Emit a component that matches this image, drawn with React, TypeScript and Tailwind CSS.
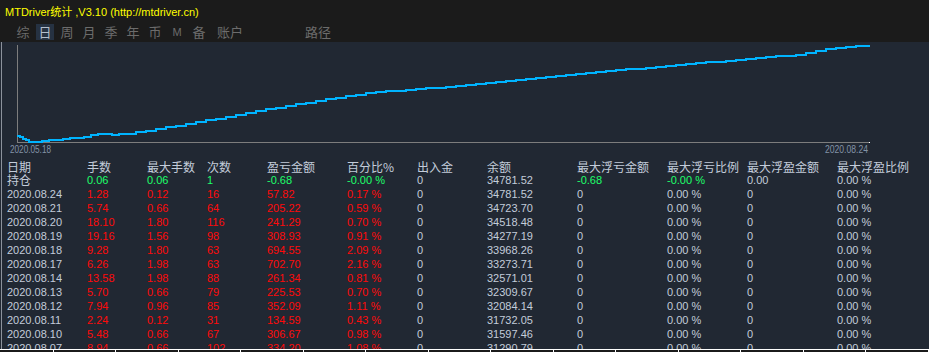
import React from "react";

const G = "text-[#1eff6a]";
const R = "text-[#ff0a0a]";
const W = "text-[#c3ccda]";

type Row = string[];
const rows: Row[] = [
  ["2020.08.24", "1.28", "0.12", "16", "57.82", "0.17 %", "0", "34781.52"],
  ["2020.08.21", "5.74", "0.66", "64", "205.22", "0.59 %", "0", "34723.70"],
  ["2020.08.20", "18.10", "1.80", "116", "241.29", "0.70 %", "0", "34518.48"],
  ["2020.08.19", "19.16", "1.56", "98", "308.93", "0.91 %", "0", "34277.19"],
  ["2020.08.18", "9.28", "1.80", "63", "694.55", "2.09 %", "0", "33968.26"],
  ["2020.08.17", "6.26", "1.98", "63", "702.70", "2.16 %", "0", "33273.71"],
  ["2020.08.14", "13.58", "1.98", "88", "261.34", "0.81 %", "0", "32571.01"],
  ["2020.08.13", "5.70", "0.66", "79", "225.53", "0.70 %", "0", "32309.67"],
  ["2020.08.12", "7.94", "0.96", "85", "352.09", "1.11 %", "0", "32084.14"],
  ["2020.08.11", "2.24", "0.12", "31", "134.59", "0.43 %", "0", "31732.05"],
  ["2020.08.10", "5.48", "0.66", "67", "306.67", "0.98 %", "0", "31597.46"],
  ["2020.08.07", "8.94", "0.66", "102", "334.20", "1.08 %", "0", "31290.79"],
];

const headers = ["日期", "手数", "最大手数", "次数", "盈亏金额", "百分比%", "出入金", "余额", "最大浮亏金额", "最大浮亏比例", "最大浮盈金额", "最大浮盈比例"];

const keyPts: [number, number][] = [
  [14, 135.5], [20, 139], [28, 142.5], [40, 141], [50, 140], [60, 139], [72, 138], [90, 135], [97, 133],
  [103, 134], [110, 135], [120, 134], [140, 131], [165, 127], [200, 121], [233, 115], [270, 108],
  [300, 103], [330, 98], [365, 93], [400, 90], [430, 88], [465, 85], [500, 81], [530, 78], [565, 75],
  [600, 71], [640, 68], [680, 64], [720, 61], [765, 57], [795, 55], [805, 53], [815, 51], [830, 48],
  [850, 46], [867, 45.5],
];

function interp(x: number) {
  for (let i = 0; i < keyPts.length - 1; i++) {
    const [x0, y0] = keyPts[i];
    const [x1, y1] = keyPts[i + 1];
    if (x >= x0 && x <= x1) return y0 + ((y1 - y0) * (x - x0)) / (x1 - x0);
  }
  return keyPts[keyPts.length - 1][1];
}

function buildPath() {
  const off = 42;
  let d = `M14 ${Math.round(interp(14)) - off}`;
  let x = 14;
  const step = (xx: number) => (xx < 30 ? 3 : xx < 120 ? 7 : 10);
  while (x < 867) {
    const nx = Math.min(867, x + step(x));
    d += ` H${nx} V${Math.round(interp(nx)) - off}`;
    x = nx;
  }
  return d;
}

export default function App() {
  const path = buildPath();
  const cjk = "font-['Noto_Sans_CJK_SC',sans-serif]";
  const num = "font-['Liberation_Sans',Arial,'Noto_Sans_CJK_SC',sans-serif]";
  const tabs: [string, string][] = [
    ["综", "w-[22px]"], ["日", "w-[22px]"], ["周", "w-[22px]"], ["月", "w-[22px]"], ["季", "w-[22px]"],
    ["年", "w-[22px]"], ["币", "w-[22px]"], ["M", "w-[22px]"], ["备", "w-[22px]"], ["账户", "w-[40px]"],
  ];
  return (
    <div className="w-[929px] h-[352px] overflow-hidden bg-[#212833] flex flex-col">
      {/* top bar */}
      <div className="h-[42px] bg-[#1b1b1b] flex flex-col shrink-0">
        <div className={`h-[24px] pl-[5px] pt-[5px] text-[11px] leading-[14px] text-[#ffff00] ${num}`}>
          MTDriver统计 ,V3.10 (http://mtdriver.cn)
        </div>
        <div className={`flex items-center h-[16px] pl-[12px] text-[13px] leading-[16px] text-[#6c6c6c] ${cjk}`}>
          {tabs.map(([t, w]) => (
            <div key={t} className={`${w} flex justify-center`}>
              {t === "日" ? (
                <span className="w-[18px] h-[16px] flex items-center justify-center bg-[#263242] text-[#b4bfcd]">日</span>
              ) : t === "M" ? (
                <span className={`text-[11px] ${num}`}>M</span>
              ) : (
                <span>{t}</span>
              )}
            </div>
          ))}
          <div className="w-[40px] ml-[48px] flex justify-center">路径</div>
        </div>
      </div>
      {/* body */}
      <div className="flex-1 flex flex-col ml-[1px] border-l border-[#8c929c] min-h-0">
        <div className="h-[118px] shrink-0">
          <svg width="928" height="118" viewBox="-1 0 928 118">
            <line x1="14.5" y1="3" x2="14.5" y2="100.5" stroke="#7d7d7d" strokeWidth="1" />
            <line x1="14" y1="100.5" x2="867" y2="100.5" stroke="#7d7d7d" strokeWidth="1" />
            <rect x="866" y="100" width="1" height="1" fill="#ffffff" />
            <path d={path} fill="none" stroke="#00b4ff" strokeWidth="2" shapeRendering="crispEdges" />
            <text x="7" y="111" fontSize="10" fill="#8393a7" fontFamily="Liberation Sans, Arial, sans-serif" textLength="41" lengthAdjust="spacingAndGlyphs">2020.05.18</text>
            <text x="822" y="111" fontSize="10" fill="#8393a7" fontFamily="Liberation Sans, Arial, sans-serif" textLength="43" lengthAdjust="spacingAndGlyphs">2020.08.24</text>
          </svg>
        </div>
        <div className="flex-1 min-h-0 overflow-hidden pl-[5px]">
          <div className={`grid grid-cols-[80px_60px_60px_60px_80px_70px_70px_90px_90px_80px_90px_1fr] h-[13px] text-[12px] leading-[13px] ${W} ${cjk}`}>
            {headers.map((h) => (
              <div key={h} className="whitespace-nowrap">{h}</div>
            ))}
          </div>
          <div className={`grid grid-cols-[80px_60px_60px_60px_80px_70px_70px_90px_90px_80px_90px_1fr] h-[14px] text-[11px] leading-[14px] ${num}`}>
            <div className={`${W} text-[12px] ${cjk}`}>持仓</div>
            <div className={G}>0.06</div>
            <div className={G}>0.06</div>
            <div className={G}>1</div>
            <div className={G}>-0.68</div>
            <div className={G}>-0.00 %</div>
            <div className={W}>0</div>
            <div className={W}>34781.52</div>
            <div className={G}>-0.68</div>
            <div className={G}>-0.00 %</div>
            <div className={W}>0.00</div>
            <div className={W}>0.00 %</div>
          </div>
          {rows.map((r) => (
            <div key={r[0]} className={`grid grid-cols-[80px_60px_60px_60px_80px_70px_70px_90px_90px_80px_90px_1fr] h-[14px] text-[11px] leading-[14px] ${num}`}>
              <div className={W}>{r[0]}</div>
              <div className={R}>{r[1]}</div>
              <div className={R}>{r[2]}</div>
              <div className={R}>{r[3]}</div>
              <div className={R}>{r[4]}</div>
              <div className={R}>{r[5]}</div>
              <div className={W}>{r[6]}</div>
              <div className={W}>{r[7]}</div>
              <div className={W}>0</div>
              <div className={W}>0.00 %</div>
              <div className={W}>0</div>
              <div className={W}>0.00 %</div>
            </div>
          ))}
        </div>
      </div>
      {/* status bar */}
      <div className="h-[3px] shrink-0 border-t border-white bg-[#1b1b1b] flex">
        <div className="w-[55px] border-r border-white" />
        {Array.from({ length: 14 }).map((_, i) => (
          <div key={i} className="w-[64px] border-r border-white" />
        ))}
      </div>
    </div>
  );
}
